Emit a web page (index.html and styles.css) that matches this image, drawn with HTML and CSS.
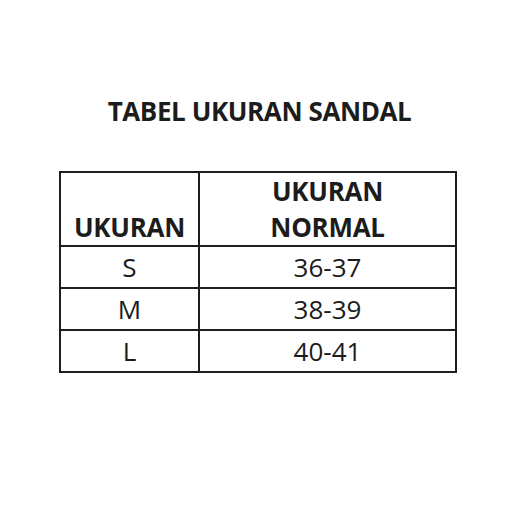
FILE: index.html
```html
<!DOCTYPE html>
<html>
<head>
<meta charset="utf-8">
<link rel="stylesheet" href="styles.css">
</head>
<body>
<div class="page">
  <h1 class="title">TABEL UKURAN SANDAL</h1>
  <table class="size-table">
    <thead>
      <tr>
        <th class="col-size">UKURAN</th>
        <th class="col-normal">UKURAN<br>NORMAL</th>
      </tr>
    </thead>
    <tbody>
      <tr><td>S</td><td>36-37</td></tr>
      <tr><td>M</td><td>38-39</td></tr>
      <tr><td>L</td><td>40-41</td></tr>
    </tbody>
  </table>
</div>
</body>
</html>
```
FILE: styles.css
```css
html, body {
  margin: 0;
  padding: 0;
  background: #ffffff;
}
.page {
  width: 525px;
  height: 507px;
  font-family: "Open Sans", "Liberation Sans", sans-serif;
  color: #1c1c1c;
  padding-top: 93px;
  box-sizing: border-box;
}
.title {
  margin: 0 0 42px 0;
  font-size: 26px;
  line-height: 36px;
  font-weight: 700;
  text-align: center;
  letter-spacing: -0.4px;
  padding-right: 6px;
}
.size-table {
  margin-left: 59px;
  width: 398px;
  border-collapse: collapse;
  border: 2px solid #1e1e1e;
}
.size-table th,
.size-table td {
  border: 2px solid #1e1e1e;
  text-align: center;
  padding: 0;
  font-size: 26px;
}
.size-table th {
  font-weight: 700;
  line-height: 36px;
  vertical-align: bottom;
  height: 72px;
  letter-spacing: -0.3px;
}
.col-size {
  width: 137px;
}
.size-table td {
  font-weight: 400;
  line-height: 40px;
  height: 40px;
}
```
